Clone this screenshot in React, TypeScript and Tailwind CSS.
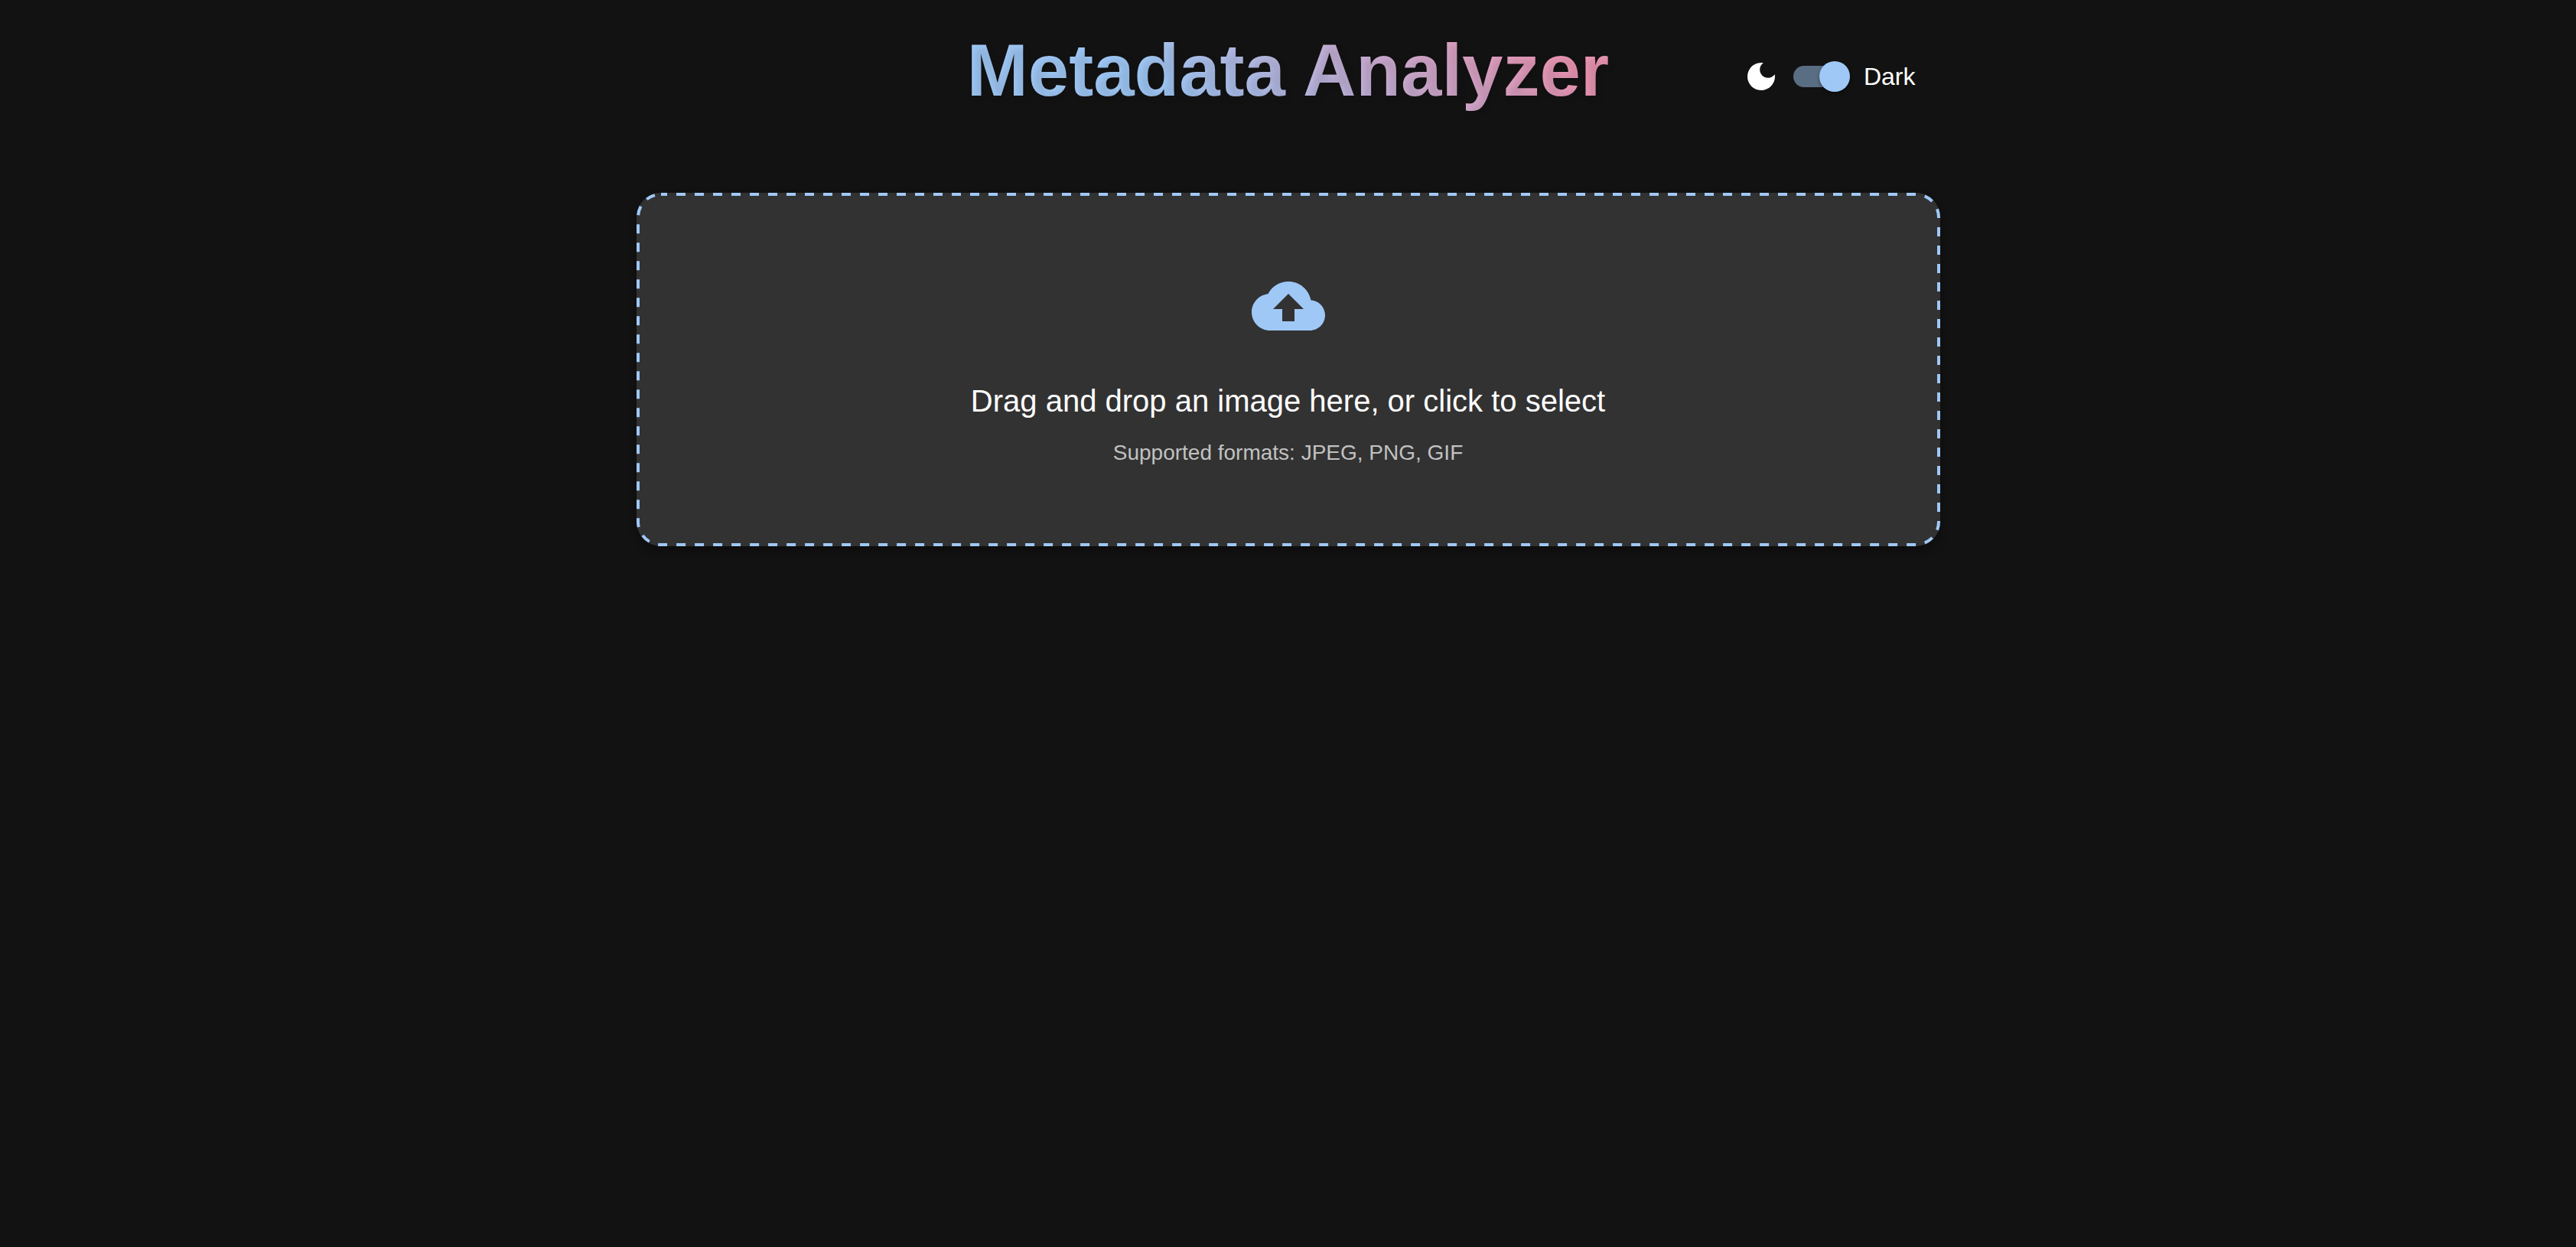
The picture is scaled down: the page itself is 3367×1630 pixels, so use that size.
import { useState } from "react";

function MoonIcon() {
  return (
    <svg viewBox="0 0 24 24" className="size-12 shrink-0 fill-white" aria-hidden="true">
      <path d="M12 3c-4.97 0-9 4.03-9 9s4.03 9 9 9 9-4.03 9-9c0-.46-.04-.92-.1-1.36-.98 1.37-2.58 2.26-4.4 2.26-2.98 0-5.4-2.42-5.4-5.4 0-1.81.89-3.42 2.26-4.4-.44-.06-.9-.1-1.36-.1z" />
    </svg>
  );
}

function CloudUploadIcon() {
  return (
    <svg viewBox="0 0 24 24" className="size-24 fill-[#9fc8f6]" aria-hidden="true">
      <path d="M19.35 10.04C18.67 6.59 15.64 4 12 4 9.11 4 6.6 5.64 5.35 8.04 2.34 8.36 0 10.91 0 14c0 3.31 2.69 6 6 6h13c2.76 0 5-2.24 5-5 0-2.64-2.05-4.78-4.65-4.96zM14 13v4h-4v-4H7l5-5 5 5h-3z" />
    </svg>
  );
}

function ThemeSwitch() {
  const [dark, setDark] = useState(true);
  return (
    <div className="flex items-center justify-self-end py-10 pr-8">
      <MoonIcon />
      <label className="flex cursor-pointer items-center gap-[18px] pl-[18px] text-[32px] leading-12 text-white">
        <span className="relative flex h-10 w-[74px] items-center">
          <input
            type="checkbox"
            role="switch"
            checked={dark}
            onChange={(e) => setDark(e.target.checked)}
            className="peer absolute inset-0 z-10 m-0 cursor-pointer opacity-0"
          />
          <span className="h-7 w-[68px] rounded-full bg-white/30 peer-checked:bg-[#596d83]" />
          <span className="absolute left-0 size-10 rounded-full bg-white shadow-[0_2px_4px_rgba(0,0,0,0.4)] peer-checked:right-0 peer-checked:left-auto peer-checked:bg-[#9fc8f6]" />
        </span>
        Dark
      </label>
    </div>
  );
}

function DropZone() {
  return (
    <label className="relative flex cursor-pointer flex-col items-center rounded-[32px] bg-[#323232] px-8 pt-[100px] pb-[102px] text-center shadow-[0_6px_12px_rgba(0,0,0,0.3)]">
      <svg className="pointer-events-none absolute inset-0 size-full overflow-visible" aria-hidden="true">
        <rect
          x="2"
          y="2"
          rx="30"
          className="h-[calc(100%-4px)] w-[calc(100%-4px)] fill-none stroke-[#9fc8f6] stroke-4"
          strokeDasharray="12 12"
          strokeDashoffset="4"
        />
      </svg>
      <input type="file" accept="image/jpeg,image/png,image/gif" className="sr-only" />
      <CloudUploadIcon />
      <span className="mt-11 text-[40px] leading-16 text-white">
        Drag and drop an image here, or click to select
      </span>
      <span className="mt-4 text-[28px] leading-10 text-[#c1c1c1]">Supported formats: JPEG, PNG, GIF</span>
    </label>
  );
}

export default function App() {
  return (
    <div className="min-h-screen bg-[#121212] font-['Liberation_Sans',Arial,sans-serif]">
      <main className="mx-auto max-w-[1704px] pt-9">
        <header className="mb-22 grid grid-cols-[1fr_auto_1fr] items-start">
          <h1 className="col-start-2 bg-[linear-gradient(45deg,#9fc8f6_30%,#ea94b2_90%)] bg-clip-text text-[96px] leading-28 font-bold text-transparent [text-shadow:4px_4px_8px_rgba(0,0,0,0.1)]">
            Metadata Analyzer
          </h1>
          <ThemeSwitch />
        </header>
        <DropZone />
      </main>
    </div>
  );
}
